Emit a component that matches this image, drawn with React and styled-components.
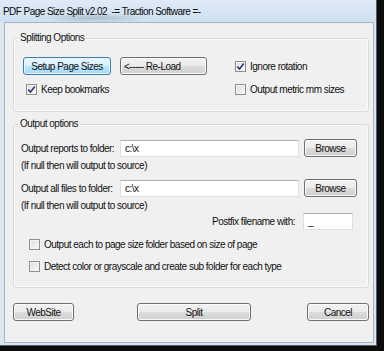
import React from "react";
import styled, { createGlobalStyle } from "styled-components";

const GlobalStyle = createGlobalStyle`
  html, body {
    margin: 0;
    padding: 0;
    background: #0b0b0b;
  }
  body {
    font-family: "Liberation Sans", Arial, sans-serif;
    font-size: 10px;
    letter-spacing: -0.5px;
    white-space: nowrap;
    color: #111;
  }
`;

const Window = styled.div`
  width: 377px;
  height: 346px;
  box-sizing: border-box;
  display: flex;
  flex-direction: column;
  border-right: 1px solid #56606a;
  border-bottom: 1px solid #56606a;
  background: #dce6f0;
`;

const TitleBar = styled.div`
  height: 22px;
  flex: none;
  display: flex;
  align-items: center;
  padding-left: 3px;
  white-space: pre;
  font-size: 10px;
  letter-spacing: -0.55px;
  color: #0a0a0a;
  background:
    radial-gradient(ellipse 55px 5px at 95px 18px, rgba(110, 122, 138, 0.35), transparent),
    linear-gradient(to bottom, #dfeaf6 0%, #d4e4f3 60%, #cfe0f1 100%);
`;

const Frame = styled.div`
  flex: 1;
  display: flex;
  padding: 0 2px 2px 4px;
`;

const Body = styled.div`
  flex: 1;
  display: flex;
  flex-direction: column;
  background: #f0f0f0;
  border: 1px solid #a7b5c3;
  padding: 9px 4px 0 8px;
`;

const Group = styled.fieldset`
  margin: ${(p) => p.$top || 0}px 0 0 0;
  padding: 0;
  min-width: 0;
  border: 1px solid #d5dbe0;
  border-radius: 3px;
  box-shadow: inset 0 0 0 1px #fbfbfb;
`;

const Legend = styled.legend`
  margin-left: 4px;
  padding: 0 2px;
  line-height: 12px;
`;

const SplitGrid = styled.div`
  display: grid;
  grid-template-columns: 212px 1fr;
  row-gap: 8px;
  align-items: center;
  padding: 13px 12px 15px 9px;
`;

const ButtonRow = styled.div`
  display: flex;
  gap: 9px;
`;

const Button = styled.button`
  box-sizing: border-box;
  height: 18px;
  width: ${(p) => p.$w}px;
  padding: 0;
  font: inherit;
  letter-spacing: inherit;
  color: #111;
  border: 1px solid ${(p) => (p.$focus ? "#3c7fb1" : "#707070")};
  border-radius: 3px;
  box-shadow: inset 0 0 0 1px ${(p) => (p.$focus ? "#e5f6fe" : "#fbfbfb")};
  background: ${(p) =>
    p.$focus
      ? "linear-gradient(to bottom, #eaf6fd 0%, #d9f0fc 50%, #bee6fd 50%, #a7d9f5 100%)"
      : "linear-gradient(to bottom, #f2f2f2 0%, #ebebeb 50%, #dddddd 50%, #cfcfcf 100%)"};
  text-align: ${(p) => p.$align || "center"};
  padding-left: ${(p) => (p.$align ? 3 : 0)}px;
`;

const Check = styled.label`
  display: flex;
  align-items: center;
  gap: 4px;
  height: 13px;
  margin-left: ${(p) => p.$ml || 0}px;
  margin-top: ${(p) => p.$mt || 0}px;
`;

const Box = styled.span`
  box-sizing: border-box;
  width: 11px;
  height: 11px;
  flex: none;
  display: flex;
  align-items: center;
  justify-content: center;
  border: 1px solid #8e8f8f;
  background: linear-gradient(135deg, #dcdcdc 0%, #f2f2f2 70%, #fbfbfb 100%);
  box-shadow: inset 0 0 0 1px #f4f4f4;
`;

const CheckBox = ({ checked, children, ...rest }) => (
  <Check {...rest}>
    <Box>
      {checked && (
        <svg width="9" height="9" viewBox="0 0 9 9">
          <path d="M1.3 4.6 L3.5 7 L7.8 1.6" fill="none" stroke="#2a3b72" strokeWidth="1.6" />
        </svg>
      )}
    </Box>
    <span>{children}</span>
  </Check>
);

const OutputBody = styled.div`
  display: flex;
  flex-direction: column;
  padding: 9px 11px 14px 7px;
`;

const FieldRow = styled.div`
  display: flex;
  align-items: center;
  height: 18px;
  margin-top: ${(p) => p.$mt || 0}px;
`;

const FieldLabel = styled.span`
  width: 99px;
  flex: none;
  padding-top: 1px;
`;

const Input = styled.div`
  box-sizing: border-box;
  width: ${(p) => p.$w}px;
  height: 17px;
  flex: none;
  display: flex;
  align-items: center;
  padding-left: 4px;
  background: #fff;
  border: 1px solid #dbdfe6;
  border-top-color: #abadb3;
  margin-right: ${(p) => p.$mr || 0}px;
`;

const Hint = styled.div`
  line-height: 12px;
  margin-top: 3px;
`;

const PostfixRow = styled.div`
  display: flex;
  justify-content: flex-end;
  align-items: center;
  gap: 8px;
  height: 18px;
  padding-right: 4px;
`;

const Footer = styled.div`
  display: flex;
  align-items: center;
  margin-top: 15px;
`;

export default function App() {
  return (
    <>
      <GlobalStyle />
      <Window>
        <TitleBar>PDF Page Size Split v2.02  -= Traction Software =-</TitleBar>
        <Frame>
          <Body>
            <Group>
              <Legend>Splitting Options</Legend>
              <SplitGrid>
                <ButtonRow>
                  <Button $w={88} $focus>Setup Page Sizes</Button>
                  <Button $w={87} $align="left">&lt;----- Re-Load</Button>
                </ButtonRow>
                <CheckBox checked>Ignore rotation</CheckBox>
                <CheckBox checked $ml={3}>Keep bookmarks</CheckBox>
                <CheckBox>Output metric mm sizes</CheckBox>
              </SplitGrid>
            </Group>

            <Group $top={6}>
              <Legend>Output options</Legend>
              <OutputBody>
                <FieldRow>
                  <FieldLabel>Output reports to folder:</FieldLabel>
                  <Input $w={179} $mr={5}>c:\x</Input>
                  <Button $w={53}>Browse</Button>
                </FieldRow>
                <Hint>(If null then will output to source)</Hint>
                <FieldRow $mt={7}>
                  <FieldLabel>Output all files to folder:</FieldLabel>
                  <Input $w={179} $mr={5}>c:\x</Input>
                  <Button $w={53}>Browse</Button>
                </FieldRow>
                <Hint>(If null then will output to source)</Hint>
                <PostfixRow>
                  <span>Postfix filename with:</span>
                  <Input $w={50}>_</Input>
                </PostfixRow>
                <CheckBox $ml={8} $mt={8}>Output each to page size folder based on size of page</CheckBox>
                <CheckBox $ml={8} $mt={9}>Detect color or grayscale and create sub folder for each type</CheckBox>
              </OutputBody>
            </Group>

            <Footer>
              <Button $w={61}>WebSite</Button>
              <Button $w={114} style={{ marginLeft: 63 }}>Split</Button>
              <Button $w={62} style={{ marginLeft: "auto" }}>Cancel</Button>
            </Footer>
          </Body>
        </Frame>
      </Window>
    </>
  );
}
